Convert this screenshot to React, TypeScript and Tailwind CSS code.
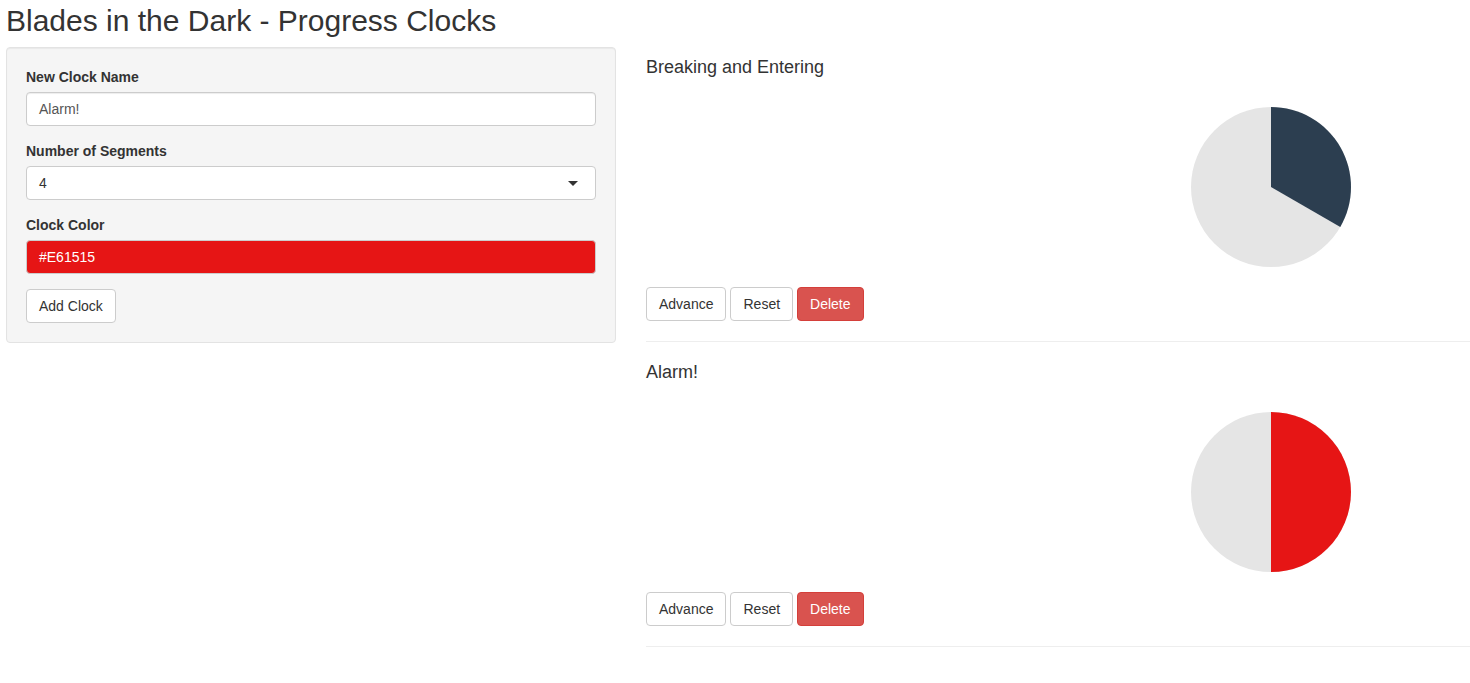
const clocks = [
  { name: "Breaking and Entering", color: "#2C3E50", filled: 2, segments: 6 },
  { name: "Alarm!", color: "#E61515", filled: 2, segments: 4 },
];

const Pie = ({ color, fraction }: { color: string; fraction: number }) => {
  const r = 80;
  const a = fraction * 2 * Math.PI;
  const x = 80 + r * Math.sin(a);
  const y = 80 - r * Math.cos(a);
  const large = fraction > 0.5 ? 1 : 0;
  return (
    <svg width="160" height="160" viewBox="0 0 160 160">
      <circle cx="80" cy="80" r="80" fill="#e5e5e5" />
      {fraction > 0 && (
        <path d={`M80 80 L80 0 A80 80 0 ${large} 1 ${x} ${y} Z`} fill={color} />
      )}
    </svg>
  );
};

const Btn = ({ children, danger }: { children: string; danger?: boolean }) => (
  <button
    className={
      danger
        ? "h-[34px] px-3 rounded border border-[#d43f3a] bg-[#d9534f] text-white text-sm"
        : "h-[34px] px-3 rounded border border-[#ccc] bg-white text-[#333] text-sm"
    }
  >
    {children}
  </button>
);

export default function App() {
  return (
    <div className="min-h-screen bg-white pl-[6px] text-[#333] font-['Liberation_Sans',Arial,sans-serif] overflow-hidden">
      <h2 className="text-[30px] leading-[33px] pt-[4px] mb-[10px]">
        Blades in the Dark - Progress Clocks
      </h2>

      <div className="flex gap-[30px]">
        {/* Sidebar */}
        <div className="w-[610px] self-start bg-[#f5f5f5] border border-[#e3e3e3] rounded p-[19px] shadow-[inset_0_1px_1px_rgba(0,0,0,0.05)]">
          <label className="block text-sm font-bold leading-5 mb-[5px]">New Clock Name</label>
          <div className="h-[34px] bg-white border border-[#ccc] rounded px-3 flex items-center text-sm text-[#555] shadow-[inset_0_1px_1px_rgba(0,0,0,0.075)] mb-[15px]">
            Alarm!
          </div>

          <label className="block text-sm font-bold leading-5 mb-[5px]">Number of Segments</label>
          <div className="h-[34px] bg-white border border-[#ccc] rounded pl-3 pr-[17px] flex items-center justify-between text-sm text-[#333] mb-[15px]">
            <span>4</span>
            <svg width="10" height="5" viewBox="0 0 10 5">
              <path d="M0 0 L10 0 L5 5 Z" fill="#333" />
            </svg>
          </div>

          <label className="block text-sm font-bold leading-5 mb-[5px]">Clock Color</label>
          <div className="h-[34px] bg-[#E61515] border border-[#ccc] rounded px-3 flex items-center text-sm text-white mb-[15px]">
            #E61515
          </div>

          <button className="h-[34px] px-3 rounded border border-[#ccc] bg-white text-sm text-[#333]">
            Add Clock
          </button>
        </div>

        {/* Clocks */}
        <div className="flex-1 pt-[10px]">
          {clocks.map((c, i) => (
            <div key={c.name}>
              <h4 className={`text-[18px] leading-5 mb-[10px] ${i > 0 ? "mt-[20px]" : ""}`}>{c.name}</h4>
              <div className="h-[200px] flex items-center">
                <div className="ml-[545px]">
                  <Pie color={c.color} fraction={c.filled / c.segments} />
                </div>
              </div>
              <div className="flex gap-1">
                <Btn>Advance</Btn>
                <Btn>Reset</Btn>
                <Btn danger>Delete</Btn>
              </div>
              <hr className="mt-[20px] border-0 border-t border-[#eee]" />
            </div>
          ))}
        </div>
      </div>
    </div>
  );
}
